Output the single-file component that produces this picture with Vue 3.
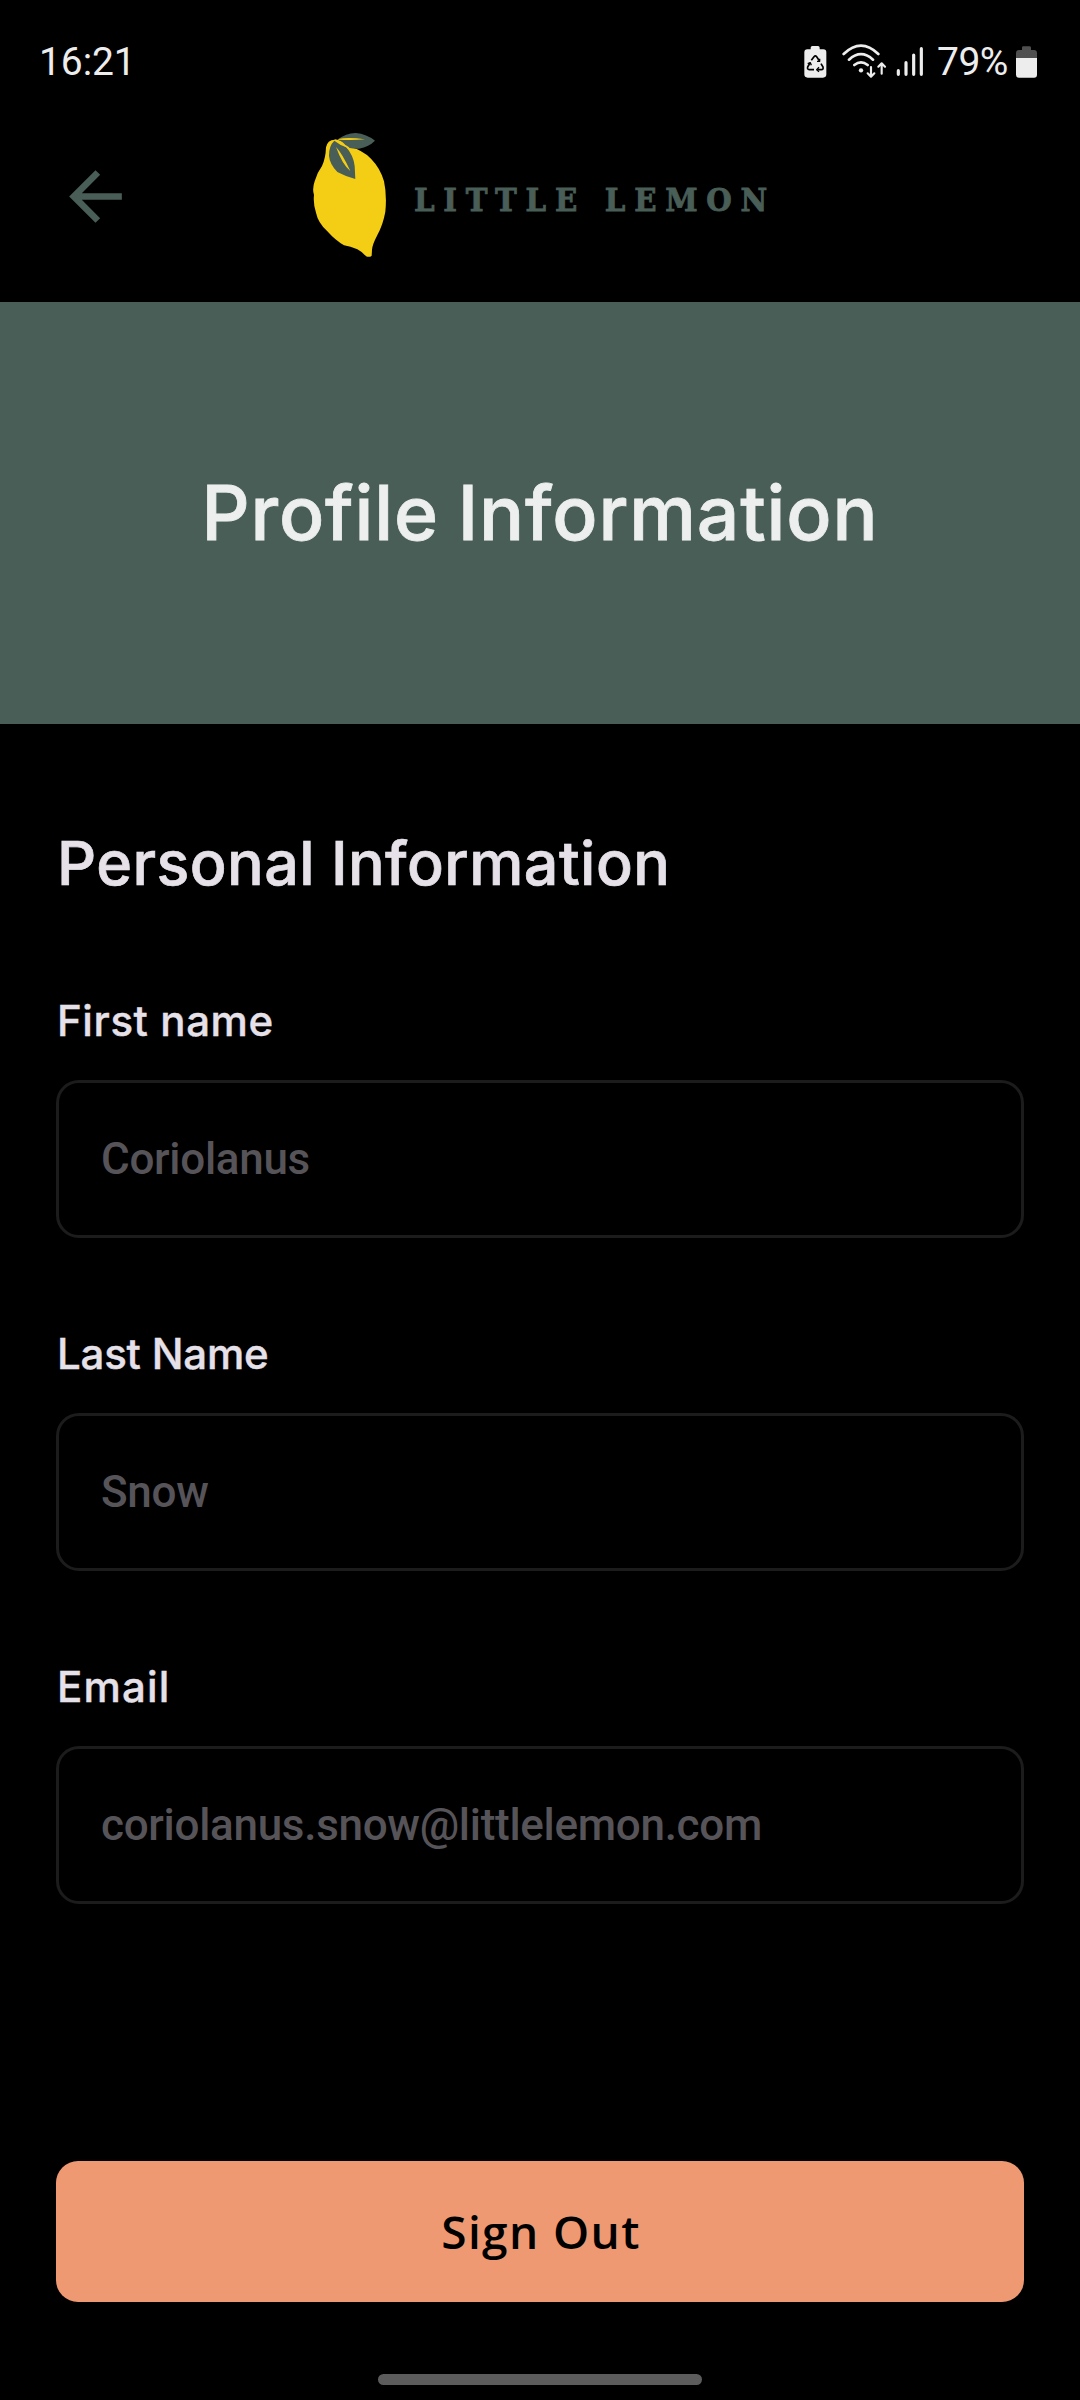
<script setup>
const fields = [
  { label: 'First name', value: 'Coriolanus', kind: 'first' },
  { label: 'Last Name', value: 'Snow', kind: 'last' },
  { label: 'Email', value: 'coriolanus.snow@littlelemon.com', kind: 'email' },
]
</script>

<template>
  <main class="screen">
    <div class="status">
      <span class="time">16:21</span>
      <svg class="status-icons" width="121" height="40" viewBox="0 0 363 120" aria-hidden="true">
        <g fill="#ededed">
          <path d="M20 25v-2q0-5 5-5h17q5 0 5 5v5h11q9 0 9 9v66q0 10-10 10H11q-10 0-10-10V37q0-9 9-9h10z" />
          <circle cx="171" cy="91" r="6.5" />
        </g>
        <g fill="none" stroke="#000" stroke-width="5" stroke-linejoin="round">
          <path d="M22 61l8-11q4-5 8 0l8 12M51 71l6 10q2 8-5 8H40M30 89H16q-7-1-5-8l7-12" />
          <path d="M39 64h8v-8M45 82l-7 7 7 6M11 71l8-3 3 8" stroke-width="4" />
        </g>
        <g fill="none" stroke="#ededed" stroke-width="8" stroke-linecap="round">
          <path d="M119 42Q171 -8 223 42M135 59Q171 26 207 59M151 75Q171 59 191 75" />
          <path d="M201 81v27M191 100l10 10 10-10M233 101V71M223 80l10-10 10 10" stroke-width="6.5" stroke-linejoin="round" />
          <path d="M283 92v11M306 68v35M329 45v58M352 26v77" stroke-width="9.5" />
        </g>
      </svg>
      <span class="percent">79%</span>
      <svg class="battery" width="21" height="32" viewBox="0 0 63 96" aria-hidden="true">
        <path d="M18 12V5q0-4 4-4h18q5 0 5 4v7h9q9 0 9 9v16H0V21q0-9 9-9z" fill="#505050" />
        <path d="M0 36h63v50q0 9-9 9H9q-9 0-9-9z" fill="#ededed" />
      </svg>
    </div>

    <header class="topbar">
      <svg class="back" width="79" height="79" viewBox="0 0 24 24" aria-label="Back">
        <path d="M20 11H7.83l5.59-5.59L12 4l-8 8 8 8 1.41-1.41L7.83 13H20v-2z" fill="#495e57" />
      </svg>
      <svg class="lemon" width="130" height="150" viewBox="0 0 390 450" aria-hidden="true">
        <path d="M108 82Q112 60 134 59Q157 61 176 79Q218 91 243 116Q272 146 282 184Q291 225 286 275Q279 315 261 347Q247 374 246 389L245 407Q239 413 228 409Q216 395 202 388Q181 379 162 376Q136 361 112 334Q84 308 78 278Q69 250 72 225Q66 207 74 184Q80 160 96 138Q107 115 108 82Z" fill="#f4ce14" />
        <path d="M144 58Q167 40 197 39Q230 42 255 62Q237 80 207 86Q181 89 164 75Q156 65 144 58Z" fill="#495e57" />
        <path d="M133 62Q151 76 169 82Q190 106 194 138L196 177Q168 170 142 156Q119 132 117 108Q116 78 133 62Z" fill="#495e57" />
        <path d="M134 60Q150 61 164 76L176 84" fill="none" stroke="#f4ce14" stroke-width="5" />
        <path d="M145 57Q173 51 225 58Q183 62 145 59ZM138 81Q157 101 181 153Q157 134 138 81Z" fill="#f4ce14" />
      </svg>
      <span class="wordmark">LITTLE LEMON</span>
    </header>

    <section class="banner"><h1>Profile Information</h1></section>

    <section class="form">
      <h2>Personal Information</h2>
      <div v-for="f in fields" :key="f.kind" class="field" :class="f.kind">
        <span class="label">{{ f.label }}</span>
        <div class="box"><span class="value">{{ f.value }}</span></div>
      </div>
      <button class="signout"><span>Sign Out</span></button>
    </section>
    <div class="home-indicator"></div>
  </main>
</template>

<style>
body { background: #000; }
</style>

<style scoped>
.screen { width: 1080px; height: 2400px; background: #000; overflow: hidden; font-family: Inter, "Noto Sans", sans-serif; color: #e6e1e9; display: flex; flex-direction: column; }
.status { height: 120px; flex: none; display: flex; align-items: flex-start; font-family: Roboto, sans-serif; color: #ededed; font-size: 39px; line-height: 46px; padding: 39px 43px 0 39px; box-sizing: border-box; }
.time { flex: 1; letter-spacing: -0.1px; }
.status-icons { margin: 1px 12px 0 0; }
.percent { letter-spacing: -0.5px; width: 78px; }
.battery { margin: 7px 0 0 1px; }
.topbar { height: 182px; flex: none; display: flex; align-items: flex-start; }
.back { margin: 37px 155px 0 56px; }
.lemon { flex: none; }
.wordmark { margin: 59.5px 0 0 -6px; font-family: "DejaVu Serif Condensed", "DejaVu Serif", serif; font-stretch: condensed; font-weight: 700; font-size: 32.5px; line-height: 40px; letter-spacing: 8.75px; color: #495e57; -webkit-text-stroke: 0.8px #495e57; white-space: nowrap; }
.banner { height: 422px; flex: none; background: #495e57; display: flex; justify-content: center; }
h1 { margin: 167px 0 0; font-size: 75px; line-height: 87px; font-weight: 500; letter-spacing: 0.85px; word-spacing: -2px; -webkit-text-stroke: 0.8px #edefee; color: #edefee; white-space: nowrap; }
.form { padding: 0 56px; display: flex; flex-direction: column; }
h2 { margin: 104px 0 0 1px; font-size: 61px; line-height: 71px; height: 71px; font-weight: 500; letter-spacing: 0.45px; word-spacing: -1px; -webkit-text-stroke: 0.7px #e6e1e9; white-space: nowrap; }
.field { height: 333px; display: flex; flex-direction: column; }
.first { margin-top: 98px; }
.label { margin-left: 1px; height: 83px; font-size: 42px; line-height: 47px; font-weight: 500; letter-spacing: 0.6px; -webkit-text-stroke: 0.4px #e6e1e9; white-space: nowrap; }
.last .label { letter-spacing: -0.2px; }
.email .label { letter-spacing: 1.2px; }
.box { height: 158px; box-sizing: border-box; border: 3px solid #1c1c1c; border-radius: 23px; display: flex; align-items: center; padding-left: 42px; }
.value { font-family: Roboto, sans-serif; font-weight: 500; font-size: 44px; line-height: 52px; letter-spacing: -0.3px; color: #565458; white-space: nowrap; }
.signout { height: 141px; margin-top: 165px; border: 0; border-radius: 22px; background: #ee9972; color: #000; font-family: "Open Sans", sans-serif; font-weight: 600; font-size: 46px; line-height: 60px; letter-spacing: 1.4px; padding: 0; }
.signout span { display: block; margin: -2px 0 0 2px; }
.home-indicator { width: 324px; height: 11px; flex: none; margin: 72px auto 0; border-radius: 6px; background: #5c5c5c; }
</style>
